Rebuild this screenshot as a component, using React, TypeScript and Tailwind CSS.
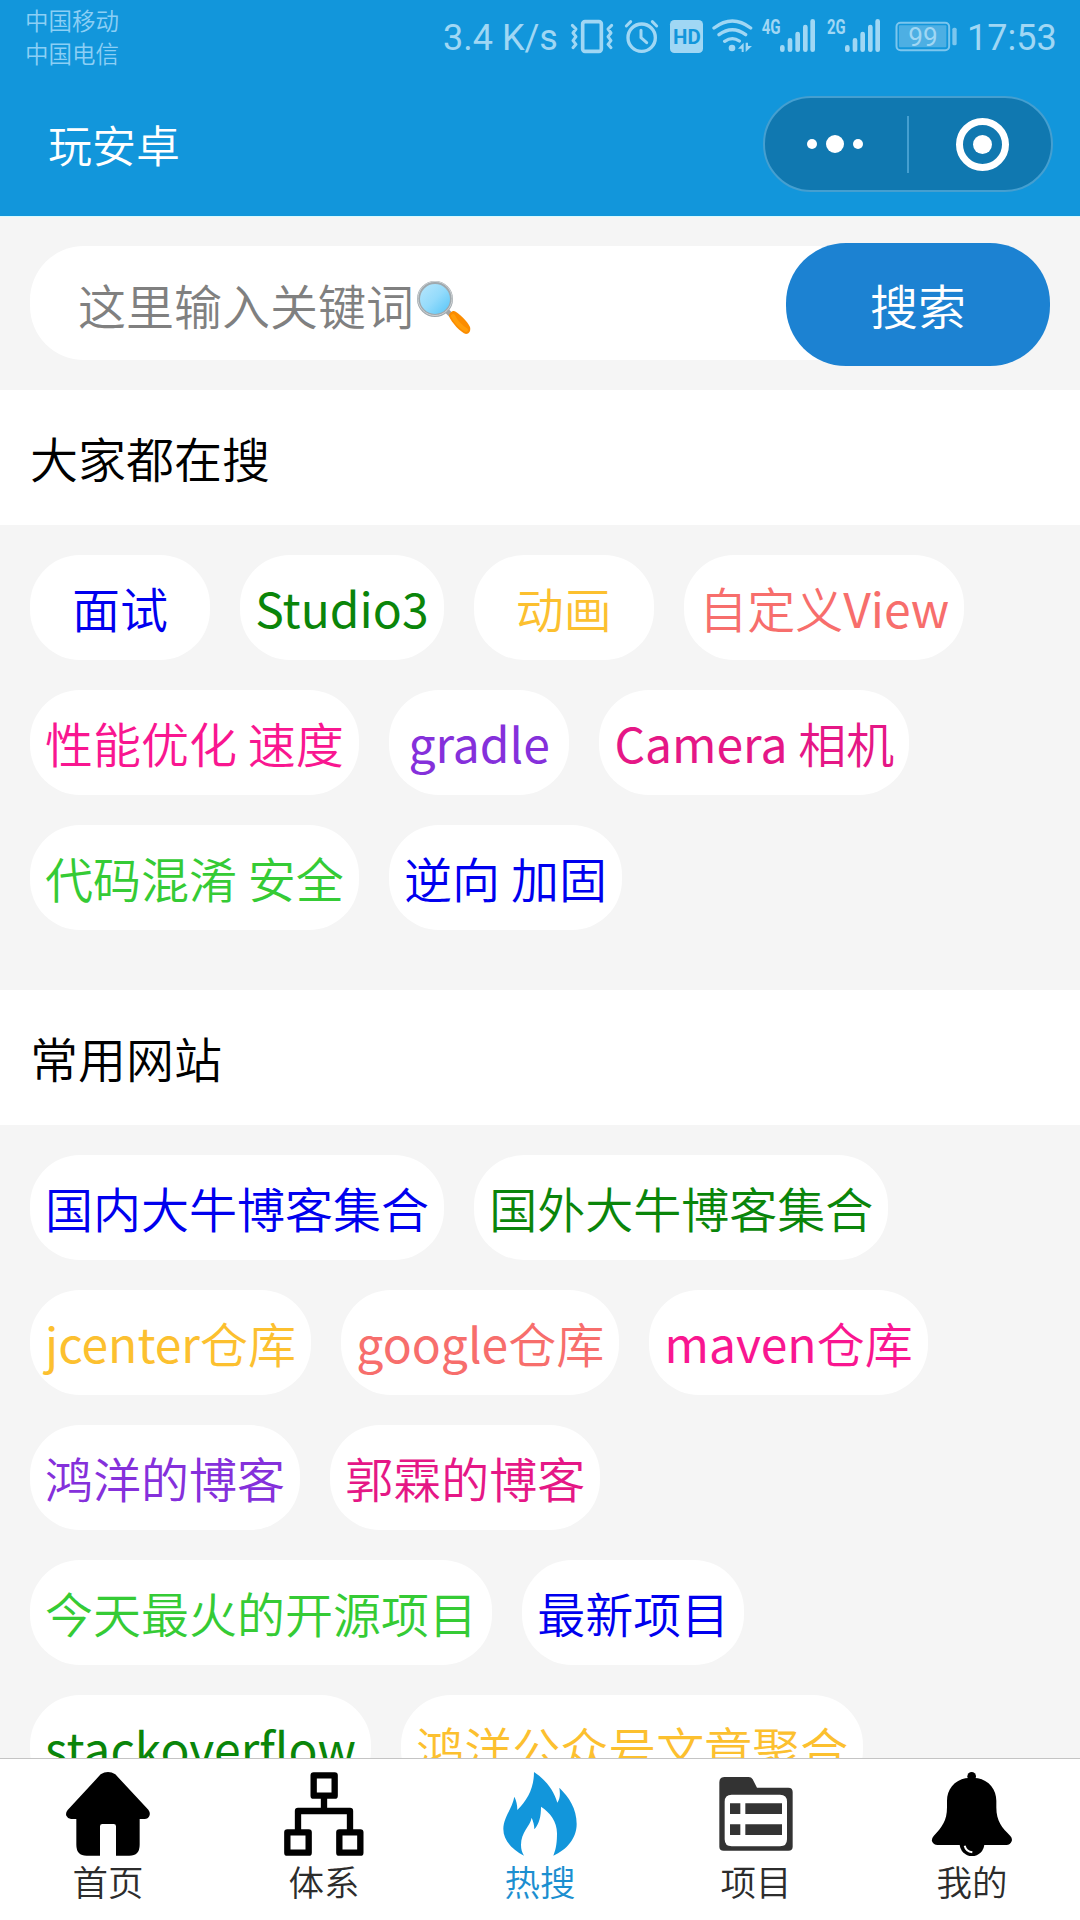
import React from "react";

type Tag = { label: string; color: string };

const hotTags: Tag[][] = [
  [
    { label: "面试", color: "text-[#0000ee]" },
    { label: "Studio3", color: "text-[#0a850a]" },
    { label: "动画", color: "text-[#fcc02f]" },
    { label: "自定义View", color: "text-[#f76e6c]" },
  ],
  [
    { label: "性能优化 速度", color: "text-[#f91690]" },
    { label: "gradle", color: "text-[#8530db]" },
    { label: "Camera 相机", color: "text-[#e51786]" },
  ],
  [
    { label: "代码混淆 安全", color: "text-[#35cb35]" },
    { label: "逆向 加固", color: "text-[#0000ee]" },
  ],
];

const siteTags: Tag[][] = [
  [
    { label: "国内大牛博客集合", color: "text-[#0000ee]" },
    { label: "国外大牛博客集合", color: "text-[#0a850a]" },
  ],
  [
    { label: "jcenter仓库", color: "text-[#fcc02f]" },
    { label: "google仓库", color: "text-[#f76e6c]" },
    { label: "maven仓库", color: "text-[#f91690]" },
  ],
  [
    { label: "鸿洋的博客", color: "text-[#8530db]" },
    { label: "郭霖的博客", color: "text-[#e51786]" },
  ],
  [
    { label: "今天最火的开源项目", color: "text-[#35cb35]" },
    { label: "最新项目", color: "text-[#0000ee]" },
  ],
  [
    { label: "stackoverflow", color: "text-[#0a850a]" },
    { label: "鸿洋公众号文章聚合", color: "text-[#fcc02f]" },
  ],
];

function StatusBar() {
  return (
    <div className="flex h-[72px] items-start text-[#a0d7f4]">
      <div className="w-[443px] shrink-0 pl-[25px] pt-[4px] text-[23.5px] leading-[33px] text-[#8ccff5]">
        <div>中国移动</div>
        <div>中国电信</div>
      </div>
      <div className="w-[127px] shrink-0 whitespace-nowrap pt-[17px] font-[Roboto] text-[36px] font-normal leading-[42px]">
        3.4 K/s
      </div>
      <svg className="h-[72px] w-[54px] shrink-0" viewBox="450 0 162 216" fill="none" stroke="currentColor">
        <rect x="488" y="65" width="56" height="89" rx="7" strokeWidth="11" />
        <path d="M457 76l11 11-9 12 9 11-9 12 9 11-9 10M575 76l-11 11 9 12-9 11 9 12-9 11 9 10" strokeWidth="9" strokeLinecap="round" strokeLinejoin="round" />
      </svg>
      <svg className="h-[72px] w-[45px] shrink-0" viewBox="612 0 135 216" fill="none" stroke="currentColor" strokeLinecap="round">
        <circle cx="665" cy="113" r="41" strokeWidth="10" />
        <path d="M663 91v22l17 15" strokeWidth="9" />
        <path d="M619 78l13-13M710 78l-13-13" strokeWidth="9" />
      </svg>
      <svg className="h-[72px] w-[43px] shrink-0" viewBox="747 0 129 216">
        <rect x="750" y="60" width="99" height="99" rx="13" fill="currentColor" />
        <text x="759" y="132" fontFamily="Roboto" fontWeight="700" fontSize="63" textLength="83" lengthAdjust="spacingAndGlyphs" fill="#1296db">
          HD
        </text>
      </svg>
      <svg className="h-[72px] w-[48px] shrink-0" viewBox="876 0 144 216" fill="none" stroke="currentColor">
        <path d="M882 84Q937 42 992 84M897 104Q937 74 977 104M914 124Q937 108 958 123" strokeWidth="10" strokeLinecap="round" />
        <circle cx="936" cy="144" r="10" fill="currentColor" stroke="none" />
        <path d="M954 146l17-18v28h-6v-10zM977 128v28l19-18h-12v-10z" fill="currentColor" stroke="none" />
      </svg>
      <svg className="h-[72px] w-[60px] shrink-0" viewBox="60 0 180 216" fill="currentColor">
        <text x="65" y="102" fontFamily="Roboto" fontWeight="700" fontSize="62" textLength="57" lengthAdjust="spacingAndGlyphs">
          4G
        </text>
        <path d="M127 142v7M150 121v28M173 102v47M196 81v68M218 64v85" stroke="currentColor" strokeWidth="14" strokeLinecap="round" />
      </svg>
      <svg className="h-[72px] w-[75px] shrink-0" viewBox="240 0 225 216" fill="currentColor">
        <text x="261" y="102" fontFamily="Roboto" fontWeight="700" fontSize="62" textLength="56" lengthAdjust="spacingAndGlyphs">
          2G
        </text>
        <path d="M322 142v7M345 121v28M368 102v47M391 81v68M413 64v85" stroke="currentColor" strokeWidth="14" strokeLinecap="round" />
      </svg>
      <svg className="h-[72px] w-[65px] shrink-0" viewBox="465 0 195 216" fill="currentColor">
        <rect x="469.5" y="68.500" width="158" height="82" rx="12" fill="none" stroke="#7cc6ee" strokeWidth="6" />
        <rect x="477" y="76" width="142" height="66" rx="3" fill="#4dafe3" />
        <rect x="637" y="83" width="13" height="53" rx="5" fill="#7cc6ee" />
        <text x="505" y="137" fontFamily="Roboto" fontWeight="400" fontSize="78" textLength="88" lengthAdjust="spacingAndGlyphs">
          99
        </text>
      </svg>
      <div className="whitespace-nowrap pl-[7px] pt-[17px] font-[Roboto] text-[36px] font-normal leading-[42px]">17:53</div>
    </div>
  );
}

function Header() {
  return (
    <header className="h-[216px] shrink-0 bg-[#1296db]">
      <StatusBar />
      <div className="flex h-[144px] items-center justify-between pl-[48px] pr-[27px]">
        <h1 className="text-[44px] leading-[60px] text-white">玩安卓</h1>
        <div className="flex h-[96px] w-[290px] items-center rounded-full border-2 border-[#459fd0] bg-[#1078b0]">
          <div className="flex w-[142px] items-center justify-center gap-[9px] pr-[2px]">
            <span className="size-[10px] rounded-full bg-white" />
            <span className="size-[18px] rounded-full bg-white" />
            <span className="size-[10px] rounded-full bg-white" />
          </div>
          <span className="h-[57px] w-[2px] bg-[#459fd0]" />
          <div className="flex flex-1 items-center justify-center pl-[5px]">
            <span className="flex size-[53px] items-center justify-center rounded-full border-[7px] border-white">
              <span className="size-[19px] rounded-full bg-white" />
            </span>
          </div>
        </div>
      </div>
    </header>
  );
}

function Magnifier() {
  return (
    <svg className="ml-[3px] mt-[7px] h-[54px] w-[54px]" viewBox="0 0 54 54">
      <defs>
        <linearGradient id="lens" x1="0" y1="0" x2="1" y2="1">
          <stop offset="0.1" stopColor="#b3e5fc" />
          <stop offset="0.5" stopColor="#94dbfb" />
          <stop offset="1" stopColor="#4fc3f7" />
        </linearGradient>
      </defs>
      <path d="M30 31l7 7" stroke="#a3a3a3" strokeWidth="5" />
      <path d="M32 36c0-3 3-5 5-5 4 1 14 11 16 16 1 4-1 7-4 7-5-1-15-12-17-18z" fill="#fb8c00" />
      <path d="M36 36c3 6 8 11 13 14" stroke="#ff9d0a" strokeWidth="4" fill="none" strokeLinecap="round" />
      <circle cx="18" cy="19" r="16.500" fill="url(#lens)" stroke="#9fa8ad" strokeWidth="3" />
      <circle cx="18" cy="18.500" r="17" fill="none" stroke="#cfd2d4" strokeWidth="1" />
    </svg>
  );
}

function SearchBar() {
  return (
    <div className="flex h-[174px] shrink-0 items-start border-t border-[#d9fbff] px-[30px] pt-[26px]">
      <div className="mt-[3px] -mr-[84px] flex h-[114px] flex-1 items-center rounded-[54px] bg-white pl-[48px] text-[48px] leading-[60px] text-[#808080]">
        <span className="pt-[2px]">这里输入关键词</span>
        <Magnifier />
      </div>
      <button className="relative h-[123px] w-[264px] rounded-[60px] bg-[#1c82d2] pb-[2px] text-[48px] leading-[60px] text-white">
        搜索
      </button>
    </div>
  );
}

function SectionTitle({ children }: { children: React.ReactNode }) {
  return (
    <h2 className="flex h-[135px] shrink-0 items-center bg-white pb-[2px] pl-[30px] text-[48px] leading-[60px] text-black">
      {children}
    </h2>
  );
}

/* Latin runs use the regular weight, Chinese runs the lighter one. */
function TagLabel({ text }: { text: string }) {
  return (
    <span className="whitespace-pre">
      {text.split(/([\x20-\x7e]+)/).map((run, i) =>
        i % 2 === 1 ? (
          <span key={i} className="font-normal">
            {run}
          </span>
        ) : (
          run
        ),
      )}
    </span>
  );
}

function TagRows({ rows }: { rows: Tag[][] }) {
  return (
    <div className="flex flex-col gap-[30px] px-[30px] pt-[30px]">
      {rows.map((row, i) => (
        <div key={i} className="flex gap-[30.3px]">
          {row.map((tag) => (
            <span
              key={tag.label}
              className={`flex h-[105px] min-w-[180px] items-center justify-center rounded-[50px] bg-white px-[15px] pb-[1px] text-[48px] leading-[60px] ${tag.color}`}
            >
              <TagLabel text={tag.label} />
            </span>
          ))}
        </div>
      ))}
    </div>
  );
}

const HomeIcon = () => (
  <svg className="size-[84px]" viewBox="198 276 252 252">
    <path d="M302 283Q324 269 346 283L445 389Q452 399 448 408Q444 417 434 417H419V494Q419 527 388 527H348V439Q348 432 341 432H307Q300 432 300 439V527H260Q229 527 229 494V417H213Q203 416 199 407Q196 398 203 390Z" fill="#000" />
  </svg>
);

const TreeIcon = () => (
  <svg className="size-[84px]" viewBox="846 276 252 252" fill="none" stroke="#000" strokeWidth="19" strokeLinejoin="round">
    <path d="M941 286h63v61h-63zM862 457h64v61h-64zM1018 457h63v61h-63zM972 347v46M894 457v-64h156v64" />
  </svg>
);

const FireIcon = () => (
  <svg className="size-[84px]" viewBox="294 276 252 252">
    <path
      d="M402 276C438 300 462 332 472 368C482 352 480 338 478 323C507 352 530 385 530 432C530 475 500 510 460 527C469 505 471 485 471 460C471 423 450 398 423 380C423 410 418 430 403 448C403 435 400 425 395 413C390 440 363 455 363 495C363 508 366 518 372 527C335 508 310 480 310 447C310 412 337 385 343 350C349 362 352 375 352 390C382 360 402 325 402 276Z"
      fill="#1296db"
    />
  </svg>
);

const ProjectIcon = () => (
  <svg className="size-[84px]" viewBox="102 276 252 252" fill="#333">
    <path
      fillRule="evenodd"
      d="M134 291H206Q214 291 218 298L231 323H325Q338 323 338 336V500Q338 512 325 512H131Q118 512 118 500V307Q118 291 134 291ZM155 344Q134 344 134 365V478Q134 499 155 499H300Q321 499 321 478V365Q321 344 300 344Z"
    />
    <path d="M150 370h31v32h-31zM196 370h110v32H196zM150 433h31v32h-31zM196 433h110v32H196z" />
  </svg>
);

const BellIcon = () => (
  <svg className="size-[84px]" viewBox="750 276 252 252">
    <circle cx="875" cy="289" r="13" />
    <circle cx="876" cy="491" r="37" />
    <path d="M875 293C925 293 949 328 949 362V382C949 424 966 443 991 468Q998 476 995 484Q991 495 979 495H773Q760 495 756 484Q754 476 761 468C786 442 801 422 801 382V362C801 328 825 293 875 293Z" />
    <path d="M854 497Q858 514 877 517" fill="none" stroke="#fff" strokeWidth="6" />
  </svg>
);

const tabs = [
  { label: "首页", Icon: HomeIcon, active: false },
  { label: "体系", Icon: TreeIcon, active: false },
  { label: "热搜", Icon: FireIcon, active: true },
  { label: "项目", Icon: ProjectIcon, active: false },
  { label: "我的", Icon: BellIcon, active: false },
];

function TabBar() {
  return (
    <nav className="grid h-[162px] shrink-0 grid-cols-5 border-t border-[#c4c4c4] bg-white">
      {tabs.map(({ label, Icon, active }) => (
        <div key={label} className="flex flex-col items-center pt-[13px]">
          <Icon />
          <span className={`text-[35.5px] leading-[50px] ${active ? "text-[#1c8fd0]" : "text-[#2c2c2c]"}`}>{label}</span>
        </div>
      ))}
    </nav>
  );
}

export default function App() {
  return (
    <div className="flex h-[1920px] w-[1080px] flex-col overflow-hidden bg-[#f5f5f5] font-['Noto_Sans_CJK_SC',sans-serif] font-[350]">
      <Header />
      <main className="flex min-h-0 flex-1 flex-col overflow-hidden">
        <SearchBar />
        <SectionTitle>大家都在搜</SectionTitle>
        <div className="h-[465px] shrink-0">
          <TagRows rows={hotTags} />
        </div>
        <SectionTitle>常用网站</SectionTitle>
        <TagRows rows={siteTags} />
      </main>
      <TabBar />
    </div>
  );
}
